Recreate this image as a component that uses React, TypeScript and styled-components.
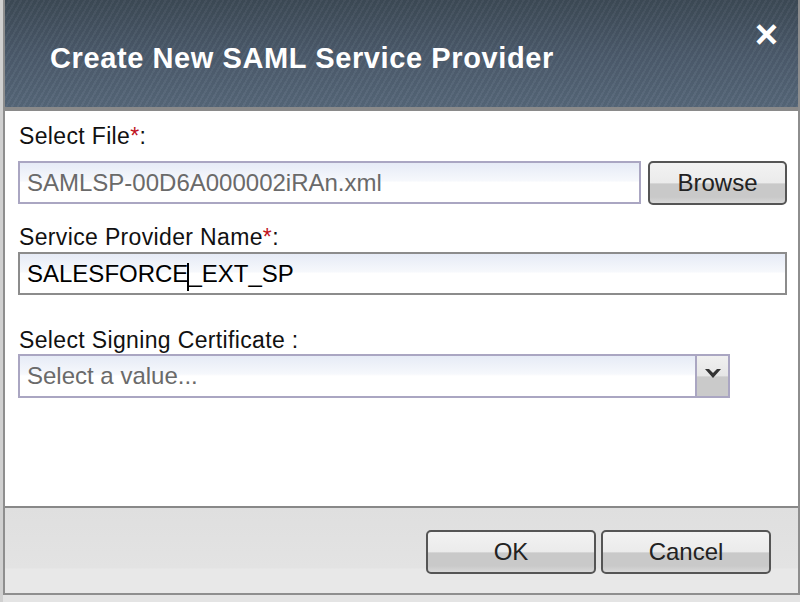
import React from 'react';
import styled, { createGlobalStyle } from 'styled-components';

const GlobalStyle = createGlobalStyle`
  html, body {
    margin: 0;
    padding: 0;
    background: #e4e4e4;
    font-family: "Liberation Sans", Arial, sans-serif;
  }
`;

const Page = styled.div`
  width: 800px;
  height: 602px;
  padding-left: 3px;
  box-sizing: border-box;
  background: linear-gradient(to right, #d0d0d0 0, #d0d0d0 3px, #e4e4e4 3px);
`;

const Dialog = styled.div`
  width: 797px;
  box-sizing: border-box;
  border-left: 2px solid #8e8e8e;
  border-right: 2px solid #8e8e8e;
  border-bottom: 2px solid #8e8e8e;
  display: flex;
  flex-direction: column;
`;

const Header = styled.div`
  height: 107px;
  border-bottom: 4px solid #8a8a8a;
  display: flex;
  align-items: flex-start;
  justify-content: space-between;
  padding: 0 20px 0 45px;
  background:
    repeating-linear-gradient(
      -60deg,
      rgba(255, 255, 255, 0.035) 0,
      rgba(255, 255, 255, 0.035) 2px,
      rgba(0, 0, 0, 0.03) 2px,
      rgba(0, 0, 0, 0.03) 5px
    ),
    linear-gradient(to bottom, #3d4a56 0%, #4b5a6b 50%, #566779 100%);
`;

const Title = styled.h1`
  margin: 41px 0 0;
  color: #ffffff;
  font-size: 29px;
  font-weight: bold;
  letter-spacing: 0.6px;
  line-height: 34px;
`;

const Close = styled.span`
  margin-top: 14px;
  color: #ffffff;
  font-size: 40px;
  font-weight: bold;
  line-height: 40px;
`;

const Body = styled.div`
  height: 395px;
  background: #ffffff;
  padding: 13px 10px 0 13px;
  box-sizing: border-box;
`;

const Label = styled.div<{ $gap?: number }>`
  margin-top: ${(p) => p.$gap ?? 0}px;
  font-size: 23px;
  letter-spacing: 0.35px;
  color: #111;
  line-height: 24px;
  padding-left: 1px;
`;

const Req = styled.span`
  color: #c0141e;
`;

const Row = styled.div`
  display: flex;
  gap: 7px;
  margin-top: 13px;
`;

const Field = styled.div<{ $width: number; $plain?: boolean; $muted?: boolean }>`
  width: ${(p) => p.$width}px;
  height: 43px;
  box-sizing: border-box;
  border: 2px solid ${(p) => (p.$plain ? '#8c8c8c' : '#aaa6c2')};
  background: linear-gradient(to bottom, #e6ebf6 0, #f6f8fc 45%, #ffffff 50%);
  color: ${(p) => (p.$muted ? '#6a6a6a' : '#000')};
  font-size: 24px;
  line-height: 39px;
  padding-left: 7px;
  display: flex;
  align-items: center;
`;

const Caret = styled.span`
  display: inline-block;
  width: 2px;
  height: 28px;
  background: #000;
  margin: 0 -1px 0 -1px;
  position: relative;
  top: 3px;
`;

const Button = styled.button<{ $width: number }>`
  width: ${(p) => p.$width}px;
  height: 44px;
  border: 2px solid #555;
  border-radius: 5px;
  background: linear-gradient(to bottom, #f2f2f2 0, #ebebeb 50%, #c9c9c9 52%, #c9c9c9 85%, #d8d8d8 100%);
  font-family: "Liberation Sans", Arial, sans-serif;
  font-size: 24px;
  color: #222;
  padding: 0;
  cursor: pointer;
`;

const SelectBox = styled.div`
  width: 712px;
  height: 44px;
  box-sizing: border-box;
  border: 2px solid #aaa6c2;
  display: flex;
  margin-top: 2px;
`;

const SelectText = styled.div`
  flex: 1;
  background: linear-gradient(to bottom, #e6ebf6 0, #f6f8fc 45%, #ffffff 50%);
  color: #6a6a6a;
  font-size: 24px;
  line-height: 40px;
  padding-left: 7px;
`;

const Arrow = styled.div`
  width: 33px;
  border-left: 2px solid #aaa6c2;
  background: linear-gradient(to bottom, #f0f0f0 0, #e6e6e6 50%, #cacaca 52%, #cacaca 100%);
  display: flex;
  align-items: center;
  justify-content: center;
  padding-bottom: 6px;
  box-sizing: border-box;
`;

const Footer = styled.div`
  height: 87px;
  border-top: 2px solid #888;
  background: linear-gradient(to bottom, #dfdfdf 0, #e3e3e3 70%, #e8e8e8 72%, #e8e8e8 100%);
  display: flex;
  justify-content: flex-end;
  align-items: flex-start;
  gap: 5px;
  padding: 22px 27px 0 0;
  box-sizing: border-box;
`;

export default function App() {
  return (
    <>
      <GlobalStyle />
      <Page>
        <Dialog>
          <Header>
            <Title>Create New SAML Service Provider</Title>
            <Close>×</Close>
          </Header>
          <Body>
            <Label>
              Select File<Req>*</Req>:
            </Label>
            <Row>
              <Field $width={623} $muted>
                SAMLSP-00D6A000002iRAn.xml
              </Field>
              <Button $width={139}>Browse</Button>
            </Row>
            <Label $gap={20}>
              Service Provider Name<Req>*</Req>:
            </Label>
            <Field $width={769} $plain style={{ marginTop: 3 }}>
              SALESFORCE<Caret />_EXT_SP
            </Field>
            <Label $gap={33}>Select Signing Certificate&nbsp;:</Label>
            <SelectBox>
              <SelectText>Select a value...</SelectText>
              <Arrow>
                <svg width="16" height="11" viewBox="0 0 16 11">
                  <path d="M0 1 L4 1 L8 5 L12 1 L16 1 L8 10 Z" fill="#333" />
                </svg>
              </Arrow>
            </SelectBox>
          </Body>
          <Footer>
            <Button $width={170}>OK</Button>
            <Button $width={170}>Cancel</Button>
          </Footer>
        </Dialog>
      </Page>
    </>
  );
}
